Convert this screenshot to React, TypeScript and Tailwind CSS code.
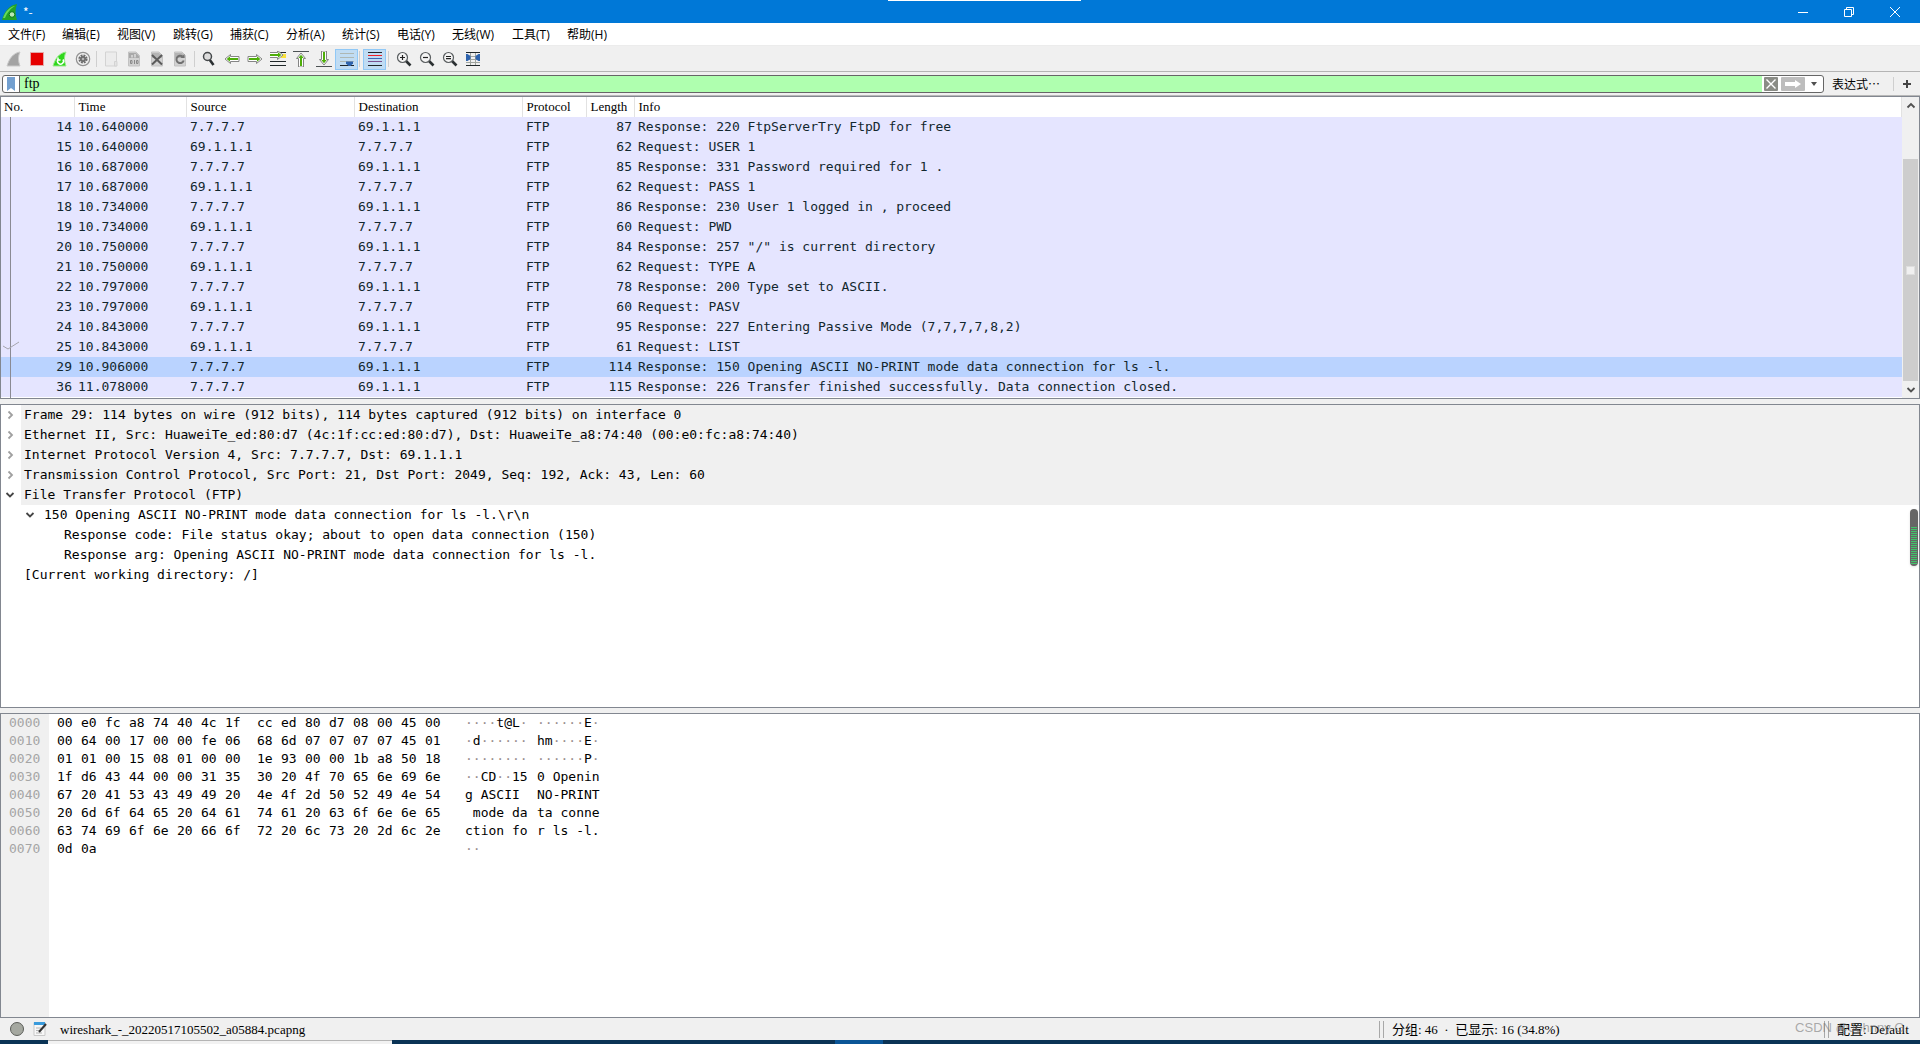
import type { ReactNode } from "react";

const menus = ["文件(F)", "编辑(E)", "视图(V)", "跳转(G)", "捕获(C)", "分析(A)", "统计(S)", "电话(Y)", "无线(W)", "工具(T)", "帮助(H)"];
const menuWidths = ["w-[54px]", "w-[55px]", "w-14", "w-[57px]", "w-14", "w-14", "w-[55px]", "w-[55px]", "w-[60px]", "w-[55px]", "w-14"];

const C = "7.7.7.7";
const S = "69.1.1.1";
const packets: [number, string, string, string, number, string][] = [
  [14, "10.640000", C, S, 87, "Response: 220 FtpServerTry FtpD for free"],
  [15, "10.640000", S, C, 62, "Request: USER 1"],
  [16, "10.687000", C, S, 85, "Response: 331 Password required for 1 ."],
  [17, "10.687000", S, C, 62, "Request: PASS 1"],
  [18, "10.734000", C, S, 86, "Response: 230 User 1 logged in , proceed"],
  [19, "10.734000", S, C, 60, "Request: PWD"],
  [20, "10.750000", C, S, 84, "Response: 257 \"/\" is current directory"],
  [21, "10.750000", S, C, 62, "Request: TYPE A"],
  [22, "10.797000", C, S, 78, "Response: 200 Type set to ASCII."],
  [23, "10.797000", S, C, 60, "Request: PASV"],
  [24, "10.843000", C, S, 95, "Response: 227 Entering Passive Mode (7,7,7,7,8,2)"],
  [25, "10.843000", S, C, 61, "Request: LIST"],
  [29, "10.906000", C, S, 114, "Response: 150 Opening ASCII NO-PRINT mode data connection for ls -l."],
  [36, "11.078000", C, S, 115, "Response: 226 Transfer finished successfully. Data connection closed."],
];

const frames = [
  "Frame 29: 114 bytes on wire (912 bits), 114 bytes captured (912 bits) on interface 0",
  "Ethernet II, Src: HuaweiTe_ed:80:d7 (4c:1f:cc:ed:80:d7), Dst: HuaweiTe_a8:74:40 (00:e0:fc:a8:74:40)",
  "Internet Protocol Version 4, Src: 7.7.7.7, Dst: 69.1.1.1",
  "Transmission Control Protocol, Src Port: 21, Dst Port: 2049, Seq: 192, Ack: 43, Len: 60",
];

const hex: [string, string, string, string, string][] = [
  ["0000", "00 e0 fc a8 74 40 4c 1f", "cc ed 80 d7 08 00 45 00", "····t@L·", "······E·"],
  ["0010", "00 64 00 17 00 00 fe 06", "68 6d 07 07 07 07 45 01", "·d······", "hm····E·"],
  ["0020", "01 01 00 15 08 01 00 00", "1e 93 00 00 1b a8 50 18", "········", "······P·"],
  ["0030", "1f d6 43 44 00 00 31 35", "30 20 4f 70 65 6e 69 6e", "··CD··15", "0 Openin"],
  ["0040", "67 20 41 53 43 49 49 20", "4e 4f 2d 50 52 49 4e 54", "g ASCII ", "NO-PRINT"],
  ["0050", "20 6d 6f 64 65 20 64 61", "74 61 20 63 6f 6e 6e 65", " mode da", "ta conne"],
  ["0060", "63 74 69 6f 6e 20 66 6f", "72 20 6c 73 20 2d 6c 2e", "ction fo", "r ls -l."],
  ["0070", "0d 0a", "", "··", ""],
];

function Icon({ children }: { children: ReactNode }) {
  return (
    <svg viewBox="0 0 16 16" className="size-4" fill="none" aria-hidden="true">
      {children}
    </svg>
  );
}

function Tool({ label, active, children }: { label: string; active?: boolean; children: ReactNode }) {
  return (
    <button
      aria-label={label}
      className={
        active
          ? "flex h-[21px] w-[23px] shrink-0 items-center justify-center border border-[#90c8f6] bg-[#c0dcf3]"
          : "flex h-[21px] w-[23px] shrink-0 items-center justify-center"
      }
    >
      <Icon>{children}</Icon>
    </button>
  );
}

const Divider = () => <span className="h-4 w-px shrink-0 bg-[#cfcfcf]" />;

const fin = "M1 15C3 8 7 2 14 1C12 5 12 10 14 15Z";

const Arrow = ({ transform }: { transform?: string }) => (
  <g transform={transform}>
    <path d="M1 8 6.500 3.500V5.500H15V10.500H6.500V12.500Z" fill="#fff" stroke="#858585" strokeLinejoin="round" />
    <path d="M2.700 8 6 5.300V7H14V9H6V10.700Z" fill="#4fae0a" />
  </g>
);

const Lens = ({ children }: { children?: ReactNode }) => (
  <>
    <path d="M10 10 14.500 14.500" stroke="#2b3032" strokeWidth="2.600" />
    <circle cx="6.500" cy="6.500" r="5" fill="#f4f4f4" stroke="#5a5e60" strokeWidth="1.200" />
    <g stroke="#222" strokeWidth="1.200">{children}</g>
  </>
);

const FileShape = () => <path d="M2.500 1H10L13.500 4.500V15H2.500Z" fill="#d2d2d2" stroke="#c2c2c2" />;

function Toolbar() {
  return (
    <div role="toolbar" className="flex h-[26px] items-center border-b border-[#b4b4b4] bg-[#f0f0f0] pt-px pl-[2px]">
      <Tool label="Start capture">
        <path d={fin} fill="#a3a3a3" stroke="#c9c9c9" />
      </Tool>
      <Tool label="Stop capture">
        <path d="M1.500 1.500H14.500V14.500H1.500Z" fill="#e60000" stroke="#e4a9a9" />
      </Tool>
      <Tool label="Restart capture">
        <path d={fin} fill="#2fd71c" stroke="#9be88e" />
        <path d="M6 8.500A3 3 0 1 0 11 8.500M6 6.500V9H8.500" stroke="#fff" strokeWidth="1.500" />
      </Tool>
      <Tool label="Capture options">
        <circle cx="8" cy="8" r="6.700" fill="#f0f0f0" stroke="#929292" strokeWidth="1.200" />
        <circle cx="8" cy="8" r="3.600" stroke="#6b6b6b" strokeWidth="2" strokeDasharray="1.900 .930" />
        <circle cx="8" cy="8" r="3" fill="#6b6b6b" />
        <circle cx="8" cy="8" r="1.300" fill="#b5b5b5" />
      </Tool>
      <span className="w-[2px]" />
      <Divider />
      <span className="w-[2px]" />
      <Tool label="Open file">
        <path d="M2.500 1H13.500V15H2.500Z" fill="#ececec" stroke="#d3d3d3" />
        <path d="M11.500 10.500H14V15H11.500Z" fill="#e4e4e4" stroke="#d3d3d3" />
      </Tool>
      <Tool label="Save file">
        <FileShape />
        <path d="M3 2H10L13 5V7H3Z" fill="#a9a9a9" />
        <path d="M4.500 9.500H6V12.500H4.500ZM8.500 9V13M10.500 9.500H12V12.500H10.500Z" stroke="#8a8a8a" />
        <path d="M6 4V6.500M9 3V6.500" stroke="#ddd" strokeWidth="1.500" />
      </Tool>
      <Tool label="Close file">
        <FileShape />
        <path d="M3 2H10L13 5V7H3Z" fill="#b4b4b4" />
        <path d="M3 4 13 13.500M13 4 3 13.500" stroke="#5b5b5b" strokeWidth="2" />
      </Tool>
      <Tool label="Reload file">
        <FileShape />
        <path d="M3 2H10L13 5V7H3Z" fill="#b4b4b4" />
        <path d="M10.500 5.500A3.700 3.700 0 1 0 11.700 9.500" stroke="#707070" strokeWidth="2" />
        <path d="M8.500 7H12.500V3Z" fill="#707070" />
      </Tool>
      <span className="w-[3px]" />
      <Divider />
      <span className="w-[2px]" />
      <Tool label="Find packet">
        <path d="M8.500 8.500 12.500 14" stroke="#2b3032" strokeWidth="2.600" />
        <circle cx="6.500" cy="5.500" r="4" fill="#dcdcdc" stroke="#44484a" strokeWidth="1.500" />
      </Tool>
      <Tool label="Previous packet"><Arrow /></Tool>
      <Tool label="Next packet"><Arrow transform="rotate(180 8 8)" /></Tool>
      <Tool label="Go to packet">
        <path d="M0 1.500H16M0 10.500H16M0 14.500H16" stroke="#20272a" strokeWidth="1.200" />
        <path d="M11 5H16" stroke="#f9e03c" strokeWidth="4" />
        <Arrow transform="rotate(180 7 7) translate(0 2)" />
      </Tool>
      <Tool label="First packet">
        <Arrow transform="rotate(90 8 8) translate(1 0)" />
        <path d="M0 .5H16" stroke="#4d5355" />
      </Tool>
      <Tool label="Last packet">
        <Arrow transform="rotate(-90 8 8) translate(1 0)" />
        <path d="M0 15.500H16" stroke="#4d5355" />
      </Tool>
      <Tool label="Auto scroll" active>
        <path d="M1 2.500H15M1 6.500H15M1 10.500H15" stroke="#aeb7b3" />
        <path d="M1 14.500H15" stroke="#20272a" />
        <path d="M7 10.500H14V12.500L11.500 15H9.500L7 12.500Z" fill="#2e63ad" />
      </Tool>
      <span className="w-px" />
      <Divider />
      <span className="w-[3px]" />
      <Tool label="Colorize packets" active>
        <path d="M1 1.500H15M1 14.500H15" stroke="#20272a" />
        <path d="M1 4.500H15" stroke="#f01f25" />
        <path d="M1 7.500H15" stroke="#3d67b1" />
        <path d="M1 10.500H15" stroke="#7a5290" />
      </Tool>
      <span className="w-[2px]" />
      <Divider />
      <span className="w-[3px]" />
      <Tool label="Zoom in"><Lens><path d="M4 6.500H9M6.500 4V9" /></Lens></Tool>
      <Tool label="Zoom out"><Lens><path d="M4 6.500H9" /></Lens></Tool>
      <Tool label="Normal size"><Lens><path d="M4 5.500H9M4 7.700H9" /></Lens></Tool>
      <Tool label="Resize columns">
        <path d="M1 5.500H15M1 8.500H15M1 11.500H15M5.500 1V15M10.500 1V15" stroke="#a0a5a0" />
        <path d="M1 1.500H15M1 14.500H15" stroke="#20272a" />
        <path d="M1 3H2.500L5.500 5V8L2.500 10H1ZM15 3H13.500L10.500 5V8L13.500 10H15Z" fill="#2e63ad" />
      </Tool>
    </div>
  );
}

function Chevron({ open }: { open?: boolean }) {
  return (
    <svg viewBox="0 0 10 10" className="size-[10px] shrink-0" fill="none" aria-hidden="true">
      {open ? (
        <path d="M1.500 3 5 6.500 8.500 3" stroke="#454545" strokeWidth="1.800" />
      ) : (
        <path d="M3.500 1.500 7 5 3.500 8.500" stroke="#a0a0a0" strokeWidth="1.800" />
      )}
    </svg>
  );
}

function Ascii({ text }: { text: string }) {
  return (
    <>
      {text.split(/(·+)/).map((part, i) => (
        <span key={i} className={part.startsWith("·") ? "text-[#9a8f8f]" : ""}>{part}</span>
      ))}
    </>
  );
}

function PacketList() {
  const th = "border-r border-[#e2e2e2] pl-1 text-left font-normal";
  return (
    <section className="flex border border-[#828790] bg-white">
      <div className="relative min-w-0 flex-1 pb-px">
        <table className="w-full table-fixed border-collapse whitespace-pre font-['DejaVu_Sans_Mono',monospace] text-[13px] leading-5 text-[#12272e]">
          <colgroup>
            <col className="w-[73px]" />
            <col className="w-28" />
            <col className="w-42" />
            <col className="w-42" />
            <col className="w-16" />
            <col className="w-12" />
            <col />
          </colgroup>
          <thead className="font-['Liberation_Serif',serif] text-[13px] text-black">
            <tr className="h-5">
              <th className="border-r border-[#e2e2e2] pl-[3px] text-left font-normal">No.</th>
              <th className={th}>Time</th>
              <th className={th}>Source</th>
              <th className={th}>Destination</th>
              <th className={th}>Protocol</th>
              <th className={th}>Length</th>
              <th className={th}>Info</th>
            </tr>
          </thead>
          <tbody>
            {packets.map(([no, time, src, dst, len, info]) => (
              <tr key={no} className={no === 29 ? "h-5 bg-[#bad3ff]" : "h-5 bg-[#e5e5ff]"}>
                <td className="pr-[2px] text-right">{no}</td>
                <td className="pl-1">{time}</td>
                <td className="pl-1">{src}</td>
                <td className="pl-1">{dst}</td>
                <td className="pl-1">FTP</td>
                <td className="pr-[2px] text-right">{len}</td>
                <td className="pl-1">{info}</td>
              </tr>
            ))}
          </tbody>
        </table>
        <svg className="absolute top-5 left-0 h-[281px] w-5" viewBox="0 0 20 281" fill="none" aria-hidden="true">
          <path d="M9.500 0V281" stroke="#8a8a93" />
          <path d="M2 229 7 232 18 225" stroke="#a5a5ad" />
        </svg>
      </div>
      <div className="flex w-[17px] flex-col items-center bg-[#f0f0f0]">
        <button aria-label="Scroll up" className="flex h-[17px] items-center">
          <svg viewBox="0 0 10 10" className="size-[10px]" fill="none"><path d="M1.500 6.500 5 3 8.500 6.500" stroke="#505050" strokeWidth="1.800" /></svg>
        </button>
        <div className="mt-[45px] flex w-[15px] flex-1 items-center justify-center bg-[#cdcdcd]">
          <span className="size-[9px] border border-[#dedede] bg-[#f0f0f0]" />
        </div>
        <button aria-label="Scroll down" className="flex h-[17px] items-center">
          <svg viewBox="0 0 10 10" className="size-[10px]" fill="none"><path d="M1.500 3 5 6.500 8.500 3" stroke="#505050" strokeWidth="1.800" /></svg>
        </button>
      </div>
    </section>
  );
}

function PacketDetails() {
  return (
    <section className="relative min-h-0 flex-1 border border-[#828790] bg-white font-['DejaVu_Sans_Mono',monospace] text-[13px] leading-5 whitespace-pre text-black">
      {frames.map((f) => (
        <div key={f} className="flex h-5 items-center pl-1">
          <Chevron />
          <span className="ml-1.5 flex-1 bg-[#f0f0f0] pl-[3px]">{f}</span>
        </div>
      ))}
      <div className="flex h-5 items-center pl-1">
        <Chevron open />
        <span className="ml-1.5 flex-1 bg-[#f0f0f0] pl-[3px]">File Transfer Protocol (FTP)</span>
      </div>
      <div className="flex h-5 items-center gap-[9px] pl-6">
        <Chevron open />
        <span>{"150 Opening ASCII NO-PRINT mode data connection for ls -l.\\r\\n"}</span>
      </div>
      <div className="pl-[63px]">Response code: File status okay; about to open data connection (150)</div>
      <div className="pl-[63px]">Response arg: Opening ASCII NO-PRINT mode data connection for ls -l.</div>
      <div className="pl-[23px]">[Current working directory: /]</div>
      <div className="absolute top-[104px] right-px h-[57px] w-2 overflow-hidden rounded-full bg-[#666] px-px pt-[18px] shadow">
        <div className="h-[38px] bg-[repeating-linear-gradient(to_bottom,#41c46a_0px,#41c46a_1px,#666_1px,#666_2px)]" />
      </div>
    </section>
  );
}

function PacketBytes() {
  return (
    <section className="flex h-[305px] border border-[#828790] bg-white bg-[linear-gradient(to_right,#f0f0f0_48px,transparent_48px)]">
      <table className="h-fit border-collapse font-['DejaVu_Sans_Mono',monospace] text-[13px] leading-[18px] whitespace-pre text-black">
        <tbody>
          {hex.map(([offset, a, b, c, d]) => (
            <tr key={offset} className="h-[18px]">
              <th className="w-12 pl-2 text-left font-normal text-[#a5a5a5]">{offset}</th>
              <td className="w-2" />
              {[...Array(8)].map((_, i) => <td key={i} className="w-6 min-w-6">{a.split(" ")[i]}</td>)}
              <td className="w-2 min-w-2" />
              {[...Array(8)].map((_, i) => <td key={i} className="w-6 min-w-6">{b.split(" ")[i]}</td>)}
              <td className="w-4 min-w-4" />
              <td className="w-[72px] min-w-[72px]"><Ascii text={c} /></td>
              <td><Ascii text={d} /></td>
            </tr>
          ))}
        </tbody>
      </table>
    </section>
  );
}

export default function App() {
  return (
    <div className="flex h-screen flex-col overflow-hidden bg-[#f0f0f0] font-['Noto_Sans_CJK_SC',sans-serif] text-xs text-black">
      <header className="relative flex h-[23px] shrink-0 items-center bg-[#0078d7] pr-[2px] text-white">
        <svg viewBox="0 0 16 16" className="ml-[2px] size-4" aria-hidden="true">
          <path d="M0 16C2 8 7 1 15 0C13 5 13 11 15 16Z" fill="#23a326" />
          <path d="M1 14C3 8 7 3 13 2C9 4 5 9 3 14Z" fill="#67d85e" />
          <circle cx="10" cy="10.500" r="2.800" fill="#b8e8b4" stroke="#0f7a1a" />
        </svg>
        <span className="ml-[5px]">*-</span>
        <span className="absolute top-0 left-[888px] h-px w-[193px] bg-white" />
        <div className="ml-auto flex">
          <button aria-label="Minimize" className="flex h-5 w-[46px] items-center justify-center">
            <svg viewBox="0 0 10 10" className="size-[10px]"><path d="M0 5.500H10" stroke="#fff" /></svg>
          </button>
          <button aria-label="Restore" className="flex h-5 w-[46px] items-center justify-center">
            <svg viewBox="0 0 10 10" className="size-[10px]" fill="none" stroke="#fff"><path d="M.5 2.500H7.500V9.500H.5ZM2.500 2.500V.5H9.500V7.500H7.500" /></svg>
          </button>
          <button aria-label="Close" className="flex h-5 w-[46px] items-center justify-center">
            <svg viewBox="0 0 10 10" className="size-[10px]" stroke="#fff"><path d="M0 0 10 10M10 0 0 10" /></svg>
          </button>
        </div>
      </header>

      <nav className="flex h-[23px] shrink-0 items-center border-b border-[#ececec] bg-white pt-[2px] pl-2 font-['Open_Sans','Noto_Sans_CJK_SC',sans-serif]">
        {menus.map((m, i) => (
          <button key={m} className={`${menuWidths[i]} text-left whitespace-nowrap`}>{m}</button>
        ))}
      </nav>

      <Toolbar />

      <div className="flex h-6 shrink-0 items-center border-b border-[#b8b8b8] pt-px pr-[9px] pl-[2px]">
        <div className="flex h-[18px] flex-1 overflow-hidden rounded-[3px] border border-[#666] bg-white">
          <button aria-label="Filter bookmarks" className="flex w-[17px] items-center justify-center border-r border-[#666]">
            <svg viewBox="0 0 8 14" className="h-3.5 w-2"><path d="M0 0H8V14L4 11 0 14Z" fill="#729fcf" /></svg>
          </button>
          <input aria-label="Display filter" defaultValue="ftp" className="min-w-0 flex-1 bg-[#afffaf] pl-1 font-['Liberation_Serif',serif] text-sm leading-4 outline-none" />
          <button aria-label="Clear filter" className="ml-[2px] flex w-3.5 items-center">
            <svg viewBox="0 0 14 14" className="size-3.5"><rect width="14" height="14" rx="1" fill="#8a8c86" /><path d="M2.500 2.500 11.500 11.500M11.500 2.500 2.500 11.500" stroke="#fff" strokeWidth="1.400" /></svg>
          </button>
          <button aria-label="Apply filter" className="ml-[3px] flex w-6 items-center">
            <svg viewBox="0 0 24 14" className="h-3.5 w-6"><rect width="24" height="14" rx="1" fill="#bdbdbd" /><path d="M4 5H14V3L20 7 14 11V9H4Z" fill="#fff" /></svg>
          </button>
          <button aria-label="Recent filters" className="flex w-[18px] items-center justify-center">
            <svg viewBox="0 0 6 4" className="h-1 w-1.5"><path d="M0 0H6L3 4Z" fill="#505050" /></svg>
          </button>
        </div>
        <button className="ml-2 w-[49px] text-left whitespace-nowrap">表达式…</button>
        <span className="ml-3 h-3.5 w-px bg-[#cfcfcf]" />
        <button aria-label="Add filter button" className="ml-[9px] flex">
          <svg viewBox="0 0 8 8" className="size-2"><path d="M0 4H8M4 0V8" stroke="#454545" strokeWidth="2" /></svg>
        </button>
      </div>

      <main className="flex min-h-0 flex-1 flex-col gap-[5px]">
        <PacketList />
        <PacketDetails />
        <PacketBytes />
      </main>

      <footer className="relative flex h-[22px] shrink-0 items-center pl-2.5 font-['Liberation_Serif','Noto_Sans_CJK_SC',serif]">
        <svg viewBox="0 0 14 14" className="size-3.5"><circle cx="7" cy="7" r="6.500" fill="#a5a8a0" stroke="#5b5d58" /></svg>
        <svg viewBox="0 0 14 14" className="ml-[9px] size-3.5" fill="none">
          <path d="M1 .5H12V13.500H1Z" fill="#f7f7f7" stroke="#c9c9c9" />
          <path d="M1 0H12V3H1Z" fill="#3a9bdc" />
          <path d="M3 6H8M3 8.500H6M3 11H9" stroke="#b5b5b5" />
          <path d="M13 2 6 10" stroke="#333" strokeWidth="2" />
        </svg>
        <span className="ml-[13px] flex-1 pt-[2px] text-[13px]">wireshark_-_20220517105502_a05884.pcapng</span>
        <span className="h-[17px] w-[5px] border-x border-[#a8a8a8]" />
        <span className="w-[440px] pt-[2px] pl-2 text-[13px] whitespace-pre">分组: 46  ·  已显示: 16 (34.8%)</span>
        <span className="h-[17px] w-[5px] border-x border-[#a8a8a8]" />
        <span className="w-[91px] pt-[2px] pl-2 text-[13px] whitespace-nowrap">配置: Default</span>
        <span className="absolute top-0 right-3 font-['Liberation_Sans',sans-serif] text-[13px] leading-5 text-[#777]/60">CSDN @Johnny G.</span>
      </footer>
      <div className="flex h-1 shrink-0 bg-[#0a3355]">
        <span className="w-12" />
        <span className="w-[344px] border-t border-[#b4b4b4] bg-[#f2f2f2]" />
        <span className="ml-[443px] w-12 bg-[#0a5596]" />
      </div>
    </div>
  );
}
